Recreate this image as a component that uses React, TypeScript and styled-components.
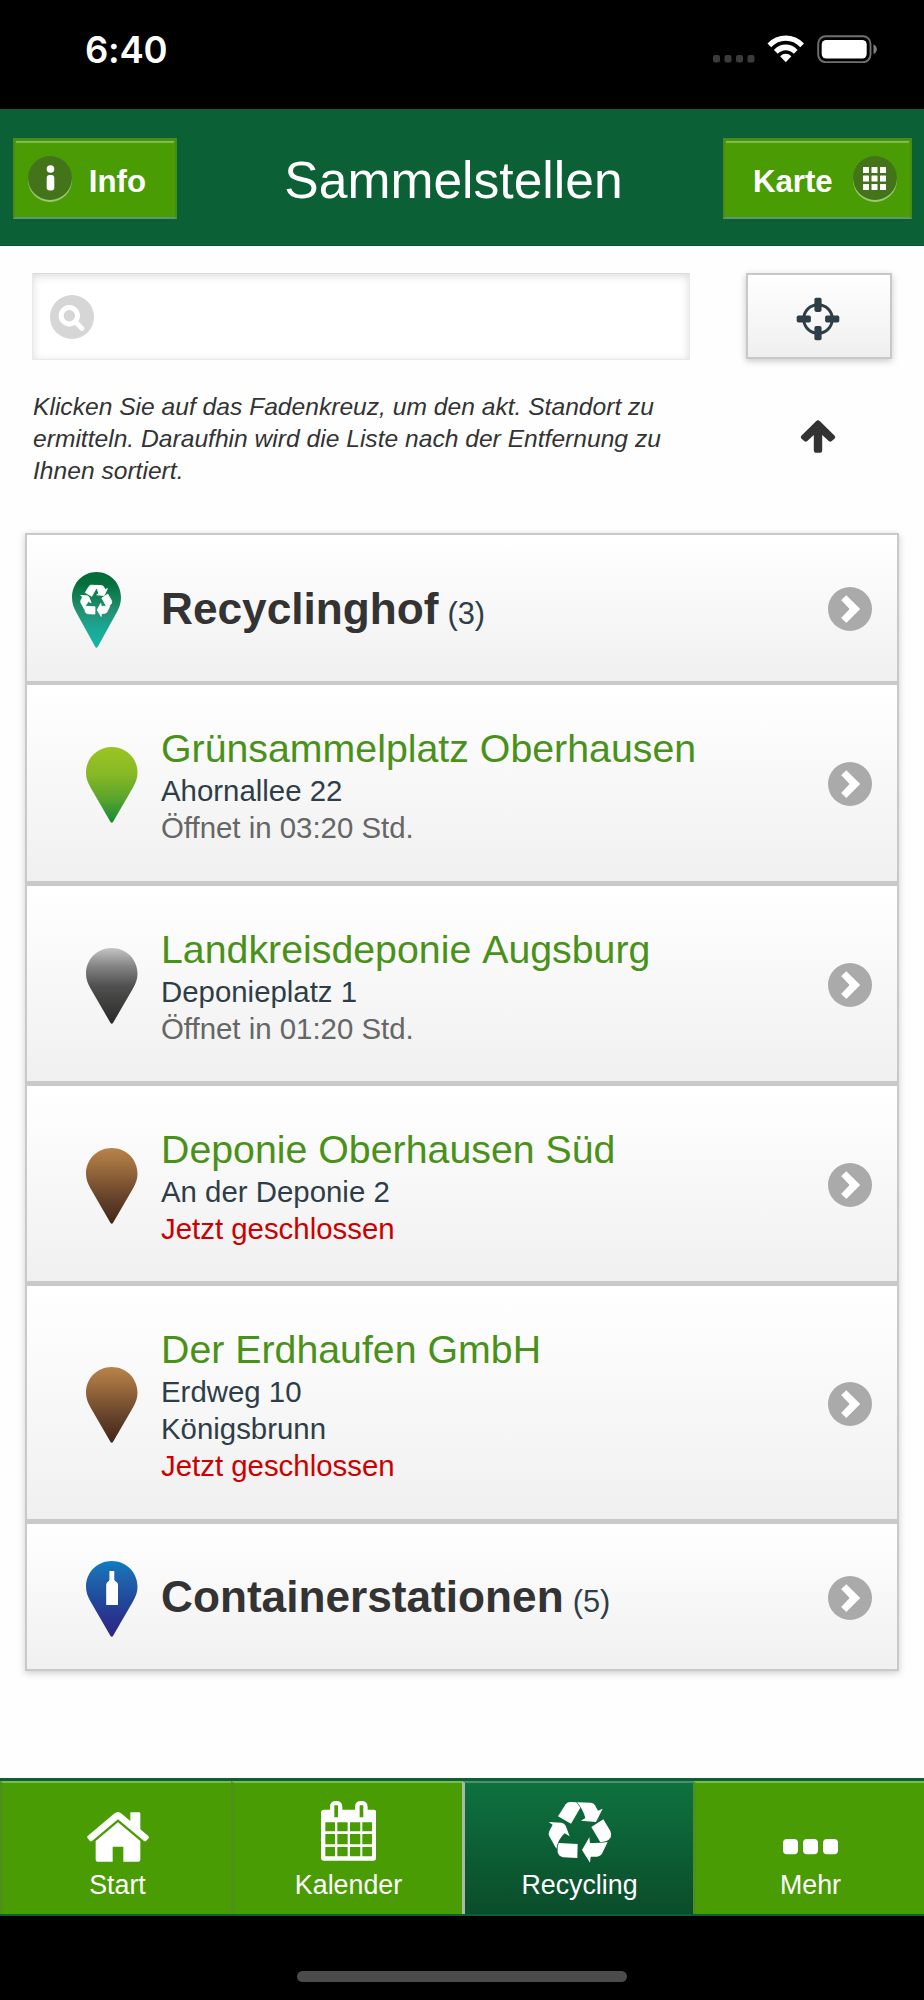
import React from "react";
import styled, { createGlobalStyle } from "styled-components";

const GlobalStyle = createGlobalStyle`
  html, body { margin: 0; padding: 0; background: #fff; }
  * { box-sizing: border-box; }
  button { font: inherit; color: inherit; cursor: pointer; }
`;

const Screen = styled.div`
  width: 924px;
  height: 2000px;
  display: flex;
  flex-direction: column;
  overflow: hidden;
  background: #fefefe;
  font-family: "Liberation Sans", Arial, sans-serif;
`;

const StatusBar = styled.div`
  height: 109px;
  flex: none;
  display: flex;
  align-items: flex-start;
  justify-content: space-between;
  padding: 27px 47px 0 85px;
  background: #000;
  color: #fff;
`;

const Time = styled.span`
  padding-top: 1px;
  font: 600 36.5px/45px Inter, sans-serif;
  letter-spacing: -0.3px;
`;

const StatusIcons = styled.div`
  display: flex;
  padding-top: 8px;

  svg { display: block; }
`;

const Header = styled.header`
  height: 137px;
  flex: none;
  display: flex;
  align-items: flex-start;
  justify-content: space-between;
  padding: 29px 12px 0 13px;
  background: #0c6035;
  border-bottom: 1px solid #0a5630;
  color: #fff;
`;

const Title = styled.h1`
  margin: 13px 0 0 7px;
  font-size: 51.6px;
  line-height: 58px;
  font-weight: 400;
`;

const HeaderButton = styled.button<{ $width: number }>`
  width: ${(p) => p.$width}px;
  height: 81px;
  display: flex;
  align-items: center;
  justify-content: space-between;
  padding: 0 13px;
  border: 2px solid #488c14;
  border-bottom-color: #5f9474;
  border-radius: 0;
  background: linear-gradient(#82b952, #82b952) 1px 1px / calc(100% - 2px) 2px no-repeat #4a9c04;
`;

const HeaderLabel = styled.span<{ $side: "left" | "right" }>`
  padding: ${(p) => (p.$side === "left" ? "7px 0 0 15px" : "7px 16px 0 0")};
  font-size: 31.2px;
  line-height: 36px;
  font-weight: 700;
`;

const Badge = styled.span`
  width: 44px;
  height: 44px;
  margin-bottom: 1px;
  display: flex;
  align-items: center;
  justify-content: center;
  border-radius: 50%;
  background: #447419;
  box-shadow: 0 2px 0 rgba(255, 255, 255, 0.45);
`;

const Finder = styled.section`
  flex: none;
  height: 287px;
  display: grid;
  grid-template-columns: 658px 146px;
  grid-template-rows: 87px auto;
  column-gap: 56px;
  align-content: start;
  padding: 27px 32px 0;
`;

const SearchField = styled.label`
  display: flex;
  align-items: center;
  gap: 12px;
  padding-left: 17px;
  border: 1px solid #e9e9e9;
  border-top-color: #dadada;
  background: #fff;
  box-shadow: inset 0 2px 8px rgba(0, 0, 0, 0.15);

  svg { flex: none; }
`;

const SearchInput = styled.input`
  flex: 1;
  height: 60px;
  border: 0;
  outline: 0;
  background: transparent;
  font: 31px "Liberation Sans", sans-serif;
`;

const LocateButton = styled.button`
  height: 86px;
  display: flex;
  align-items: center;
  justify-content: center;
  padding: 6px 2px 0 0;
  border: 2px solid #c8c8c8;
  background: linear-gradient(#fff, #efefef);
  box-shadow: 0 2px 7px rgba(0, 0, 0, 0.22);
`;

const Hint = styled.p`
  margin: 31px 0 0;
  padding-left: 1px;
  color: #333;
  font-size: 24.62px;
  line-height: 32.1px;
  font-style: italic;
`;

const ArrowCell = styled.div`
  display: flex;
  justify-content: center;
  padding: 60px 2px 0 0;
`;

const List = styled.ul`
  flex: none;
  width: 874px;
  margin: 0 0 0 25px;
  padding: 0;
  list-style: none;
  border: 2px solid #c9c9c9;
  box-shadow: 0 2px 7px rgba(0, 0, 0, 0.2);
`;

const Row = styled.li<{ $height: number; $divider: number }>`
  height: ${(p) => p.$height + p.$divider}px;
  display: grid;
  grid-template-columns: 134px 1fr 45px;
  align-items: center;
  padding-right: 24px;
  border-bottom: ${(p) => p.$divider}px solid #c9c9c9;
  background: linear-gradient(#fff, #f0f0f0);
`;

const PinCell = styled.div<{ $inset: number }>`
  padding: 4px 0 0 ${(p) => p.$inset}px;

  svg { display: block; }
`;

const ChevronCell = styled.div`
  padding-top: 2px;

  svg { display: block; }
`;

const GroupName = styled.h2`
  margin: 0;
  padding-top: 6px;
  color: #333;
  font-size: 44.2px;
  line-height: 52px;
  font-weight: 700;
  white-space: nowrap;
`;

const Count = styled.span`
  margin-left: 9px;
  color: #2e3e48;
  font-size: 30.8px;
  font-weight: 400;
`;

const PlaceText = styled.div`
  padding-top: 5px;
`;

const PlaceName = styled.h3`
  margin: 0 0 1px;
  color: #4a911a;
  font-size: 39.3px;
  line-height: 46px;
  font-weight: 400;
  font-kerning: none;
`;

const Line = styled.div<{ $color: string }>`
  color: ${(p) => p.$color};
  font-size: 29.4px;
  line-height: 37px;
`;

const TabBar = styled.nav`
  flex: none;
  height: 138px;
  margin-top: auto;
  display: grid;
  grid-template-columns: repeat(4, 1fr);
  border-top: 3px solid #0c6035;
  border-bottom: 2px solid #0c6035;
`;

const Tab = styled.a<{ $active?: boolean }>`
  display: flex;
  flex-direction: column;
  align-items: center;
  padding-left: 1px;
  border-left: 3px solid ${(p) => (p.$active ? "#a9b9a4" : "#4d911b")};
  border-top: 2px solid ${(p) => (p.$active ? "#4d8f6c" : "#7fb84d")};
  background: ${(p) => (p.$active ? "linear-gradient(#0e713f, #0a4d2a)" : "#4a9c04")};
  color: #fff;
`;

const TabIcon = styled.span`
  height: 83px;
  display: flex;
  align-items: flex-end;

  svg { display: block; }
`;

const TabLabel = styled.span`
  padding-top: 1px;
  font-size: 26.8px;
  line-height: 36px;
`;

const HomeArea = styled.div`
  flex: none;
  height: 84px;
  display: flex;
  justify-content: center;
  padding-top: 55px;
  background: #000;
`;

const HomeIndicator = styled.div`
  width: 330px;
  height: 11px;
  border-radius: 6px;
  background: #4b4b4b;
`;

const RecycleShape = () => (
  <>
    <path d="M325 126L343 127L355 143L327 191L288 169L311 133Q316 126 325 126Z" />
    <path d="M345 127L387 128Q395 129 399 136L408 152L422 146L402 186L357 182L370 174Q363 148 345 127Z" />
    <path d="M424 178L445 213Q450 223 446 232Q442 241 431 244L415 247L388 201Z" />
    <path d="M437 246L421 279Q416 289 405 290L386 290L384 308L360 270L382 232L384 249Q413 250 437 246Z" />
    <path d="M290 249L347 252L346 294L303 292Q290 289 287 277Q284 262 290 249Z" />
    <path d="M260 186L299 188Q307 189 311 197L323 229L308 220Q288 238 283 266L262 229Q258 221 262 213L272 194Z" />
  </>
);

type PinProps = { id: string; stops: [number, string][]; width?: number; children?: React.ReactNode };

const Pin = ({ id, stops, width = 51.5, children }: PinProps) => (
  <svg width={width} height="76" viewBox="0 0 51 76" preserveAspectRatio="none">
    <defs>
      <linearGradient id={id} x1="0" y1="0" x2="0" y2="1">
        {stops.map(([at, color]) => (
          <stop key={at} offset={at} stopColor={color} />
        ))}
      </linearGradient>
    </defs>
    <path d="M25.5 0C11.5 0 0 11 0 25.500C0 31 1.600 35.500 4.500 40.500L24 74.500Q25.500 77 27 74.500L46.500 40.500C49.400 35.500 51 31 51 25.500C51 11 39.500 0 25.500 0Z" fill={`url(#${id})`} />
    {children}
  </svg>
);

const brown: [number, string][] = [[0, "#b8834b"], [0.2, "#a2713f"], [0.65, "#66432b"], [1, "#432618"]];

const Chevron = () => (
  <svg width="44" height="44" viewBox="0 0 44 44">
    <circle cx="22" cy="22" r="22" fill="#aaa" />
    <path d="M13.600 13L18.300 8.700L31.800 22L18.300 35.500L13.600 31L22 22Z" fill="#fff" stroke="#fff" strokeWidth="0.800" strokeLinejoin="round" />
  </svg>
);

const dark = "#2e3e48";
const gray = "#666";
const red = "#cc0000";

const places = [
  {
    name: "Grünsammelplatz Oberhausen",
    lines: [["Ahornallee 22", dark], ["Öffnet in 03:20 Std.", gray]],
    height: 196,
    pin: <Pin id="pin-green" stops={[[0, "#9cc422"], [0.35, "#88b925"], [0.7, "#57a32c"], [1, "#128a38"]]} />,
  },
  {
    name: "Landkreisdeponie Augsburg",
    lines: [["Deponieplatz 1", dark], ["Öffnet in 01:20 Std.", gray]],
    height: 195,
    pin: <Pin id="pin-gray" stops={[[0, "#c4c4c4"], [0.25, "#828282"], [0.5, "#505050"], [1, "#2a2a28"]]} />,
  },
  {
    name: "Deponie Oberhausen Süd",
    lines: [["An der Deponie 2", dark], ["Jetzt geschlossen", red]],
    height: 195,
    pin: <Pin id="pin-brown-a" stops={brown} />,
  },
  {
    name: "Der Erdhaufen GmbH",
    lines: [["Erdweg 10", dark], ["Königsbrunn", dark], ["Jetzt geschlossen", red]],
    height: 233,
    pin: <Pin id="pin-brown-b" stops={brown} />,
  },
];

export default function App() {
  return (
    <Screen>
      <GlobalStyle />
      <StatusBar>
        <Time>6:40</Time>
        <StatusIcons>
          <svg width="164" height="28" viewBox="0 0 164 28">
            {[0, 11.500, 23, 34.500].map((x) => (
              <rect key={x} x={x} y="20" width="7" height="7.500" rx="2" fill="#3b3b3b" />
            ))}
            <path d="M54.500 8.500C64 -2.300 81.500 -2.300 91 8.500L87.300 12.200C79.500 3.600 66 3.600 58.200 12.200Z" fill="#fff" />
            <path d="M60.900 14.900C67.500 7.800 78 7.800 84.600 14.900L80.800 18.700C76.400 14 69.100 14 64.700 18.700Z" fill="#fff" />
            <path d="M67.100 21.300C70.500 18 75 18 78.400 21.300L72.800 27.300Z" fill="#fff" />
            <rect x="105.200" y="1.200" width="52.300" height="26" rx="7.500" fill="none" stroke="#717171" strokeWidth="1.900" />
            <rect x="108.700" y="5" width="45" height="18.500" rx="4.500" fill="#fff" />
            <path d="M160.500 9.500Q163.800 11 163.800 14.200T160.500 19Z" fill="#818181" />
          </svg>
        </StatusIcons>
      </StatusBar>

      <Header>
        <HeaderButton $width={164}>
          <Badge>
            <svg width="10" height="26" viewBox="0 0 10 26">
              <circle cx="5.500" cy="4" r="3.800" fill="#fff" />
              <rect x="1.700" y="10" width="7.600" height="15.500" rx="3" fill="#fff" />
            </svg>
          </Badge>
          <HeaderLabel $side="right">Info</HeaderLabel>
        </HeaderButton>
        <Title>Sammelstellen</Title>
        <HeaderButton $width={189}>
          <HeaderLabel $side="left">Karte</HeaderLabel>
          <Badge>
            <svg width="23" height="23" viewBox="0 0 23 23" fill="#fff">
              {[0, 8.500, 17].map((y) => [0, 8.500, 17].map((x) => <rect key={`${x}-${y}`} x={x} y={y} width="6" height="6" rx="0.500" />))}
            </svg>
          </Badge>
        </HeaderButton>
      </Header>

      <Finder>
        <SearchField>
          <svg width="44" height="44" viewBox="0 0 44 44">
            <circle cx="22" cy="22" r="22" fill="#d6d6d6" />
            <circle cx="19.300" cy="20.800" r="8.200" fill="none" stroke="#fff" strokeWidth="5" />
            <path d="M25.500 27L32 33.500" stroke="#fff" strokeWidth="4.800" strokeLinecap="round" />
          </svg>
          <SearchInput aria-label="Suche" />
        </SearchField>
        <LocateButton aria-label="Standort">
          <svg width="44" height="44" viewBox="0 0 44 44" fill="#2e3e48">
            <circle cx="22" cy="22" r="14.300" fill="none" stroke="#2e3e48" strokeWidth="2.900" />
            <rect x="18.400" y="0.700" width="7.200" height="14.200" rx="1.800" />
            <rect x="18.400" y="29.100" width="7.200" height="14.200" rx="1.800" />
            <rect x="0.700" y="18.400" width="14.200" height="7.200" rx="1.800" />
            <rect x="29.100" y="18.400" width="14.200" height="7.200" rx="1.800" />
          </svg>
        </LocateButton>
        <Hint>
          Klicken Sie auf das Fadenkreuz, um den akt. Standort zu
          <br />
          ermitteln. Daraufhin wird die Liste nach der Entfernung zu
          <br />
          Ihnen sortiert.
        </Hint>
        <ArrowCell>
          <svg width="36" height="34" viewBox="0 0 36 34">
            <path d="M18 0.300Q19 0.300 20 1.200L34.700 15.800Q35.800 17.200 34.700 18.600L31.500 21.300Q30.300 22.200 29 21.300L22.200 15V30.500Q22.200 32.800 20.200 32.800H15.800Q13.800 32.800 13.800 30.500V15L7 21.300Q5.700 22.200 4.500 21.300L1.300 18.600Q0.200 17.200 1.300 15.800L16 1.200Q17 0.300 18 0.300Z" fill="#333" />
          </svg>
        </ArrowCell>
      </Finder>

      <List>
        <Row $height={146} $divider={4}>
          <PinCell $inset={45}>
            <Pin id="pin-recycling" width={49} stops={[[0, "#006b35"], [0.15, "#05703c"], [0.5, "#228f70"], [0.75, "#1ba896"], [1, "#12b8a4"]]}>
              <g transform="translate(-35.700 -8.500) scale(0.172)" fill="#fff" stroke="#fff" strokeWidth="5">
                <RecycleShape />
              </g>
            </Pin>
          </PinCell>
          <GroupName>
            Recyclinghof<Count>(3)</Count>
          </GroupName>
          <ChevronCell><Chevron /></ChevronCell>
        </Row>
        {places.map((place) => (
          <Row key={place.name} $height={place.height} $divider={5}>
            <PinCell $inset={59}>{place.pin}</PinCell>
            <PlaceText>
              <PlaceName>{place.name}</PlaceName>
              {place.lines.map(([text, color]) => (
                <Line key={text} $color={color}>{text}</Line>
              ))}
            </PlaceText>
            <ChevronCell><Chevron /></ChevronCell>
          </Row>
        ))}
        <Row $height={145} $divider={0}>
          <PinCell $inset={59}>
            <Pin id="pin-blue" stops={[[0, "#0d7cc0"], [0.2, "#1f65ad"], [0.5, "#204a9c"], [0.75, "#293490"], [1, "#2a2785"]]}>
              <path d="M23.200 10H28V18.500Q28.300 20 30.300 21Q31.700 22 31.700 24V44H20V24Q20 22 21.300 21Q23.200 20 23.200 18.500Z" fill="#fff" />
            </Pin>
          </PinCell>
          <GroupName>
            Containerstationen<Count>(5)</Count>
          </GroupName>
          <ChevronCell><Chevron /></ChevronCell>
        </Row>
      </List>

      <TabBar>
        <Tab>
          <TabIcon>
            <svg width="62" height="55" viewBox="260 154 186 165" fill="#fff">
              <path d="M353 157Q358 157 364 162L390 184V158H416Q420 158 420 162V209L444 229Q447 233 445 236L438 243Q434 246 430 243L353 179L276 243Q272 246 268 243L262 236Q259 232 262 229L341 162Q348 157 353 157Z" />
              <path d="M353 188L420 244V300Q420 306 414 306H369V261H337V306H292Q286 306 286 300V244Z" />
            </svg>
          </TabIcon>
          <TabLabel>Start</TabLabel>
        </Tab>
        <Tab>
          <TabIcon>
            <svg width="55.300" height="65" viewBox="963 123 166 195">
              <path fillRule="evenodd" fill="#fff" d="M972 149H990V141Q990 123 1008.500 123T1027 141V149H1065V141Q1065 123 1084 123T1103 141V149H1120Q1129 149 1129 158V293Q1129 302 1120 302H972Q963 302 963 293V158Q963 149 972 149ZM1003 136V172H1014V136ZM1079 136V172H1090V136ZM976 187V214H1005V187ZM1012 187V214H1043V187ZM1050 187V214H1081V187ZM1087 187V214H1116V187ZM976 222V253H1005V222ZM1012 222V253H1043V222ZM1050 222V253H1081V222ZM1087 222V253H1116V222ZM976 261V289H1005V261ZM1012 261V289H1043V261ZM1050 261V289H1081V261ZM1087 261V289H1116V261Z" />
            </svg>
          </TabIcon>
          <TabLabel>Kalender</TabLabel>
        </Tab>
        <Tab $active>
          <TabIcon>
            <svg width="64" height="65" viewBox="258 123 192 195" fill="#fff">
              <RecycleShape />
            </svg>
          </TabIcon>
          <TabLabel>Recycling</TabLabel>
        </Tab>
        <Tab>
          <TabIcon>
            <svg width="55" height="27" viewBox="0 0 55 27" fill="#fff">
              <rect x="0" y="0" width="15" height="15.300" rx="4" />
              <rect x="20" y="0" width="15" height="15.300" rx="4" />
              <rect x="40" y="0" width="15" height="15.300" rx="4" />
            </svg>
          </TabIcon>
          <TabLabel>Mehr</TabLabel>
        </Tab>
      </TabBar>
      <HomeArea>
        <HomeIndicator />
      </HomeArea>
    </Screen>
  );
}
